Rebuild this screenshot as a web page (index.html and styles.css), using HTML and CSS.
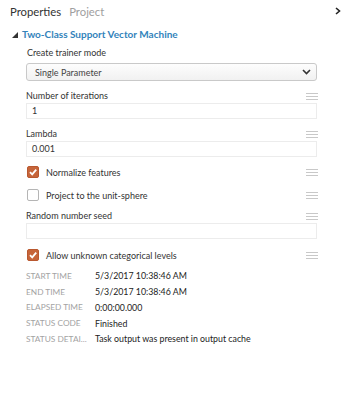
FILE: index.html
```html
<!DOCTYPE html>
<html>
<head>
<meta charset="utf-8">
<link rel="stylesheet" href="styles.css">
</head>
<body>
<div class="panel">
  <div class="tabs">
    <span class="tab active">Properties</span>
    <span class="tab">Project</span>
    <span class="collapse">
      <svg width="6" height="8" viewBox="0 0 6 8"><path d="M1 1 L4.5 4 L1 7" fill="none" stroke="#222" stroke-width="1.6"/></svg>
    </span>
  </div>
  <div class="section-title">
    <svg class="tri" width="6" height="6" viewBox="0 0 6 6"><path d="M6 0 L6 6 L0 6 Z" fill="#333"/></svg>
    <span>Two-Class Support Vector Machine</span>
  </div>
  <div class="content">
    <div class="label first">Create trainer mode</div>
    <div class="select-row">
      <div class="select">
        <span>Single Parameter</span>
        <svg width="9" height="6" viewBox="0 0 9 6"><path d="M1 1 L4.5 4.5 L8 1" fill="none" stroke="#333" stroke-width="1.6"/></svg>
      </div>
    </div>

    <div class="row label-row gap8">
      <span class="label">Number of iterations</span>
      <span class="ham"><i></i><i></i><i></i></span>
    </div>
    <div class="input">1</div>

    <div class="row label-row gap8">
      <span class="label">Lambda</span>
      <span class="ham"><i></i><i></i><i></i></span>
    </div>
    <div class="input">0.001</div>

    <div class="row check-row gap6">
      <span class="cb checked"><svg width="10" height="10" viewBox="0 0 10 10"><path d="M2 5.2 L4.2 7.4 L8.2 2.6" fill="none" stroke="#fff" stroke-width="1.8"/></svg></span>
      <span class="cb-label">Normalize features</span>
      <span class="ham"><i></i><i></i><i></i></span>
    </div>
    <div class="row check-row gap5">
      <span class="cb"></span>
      <span class="cb-label">Project to the unit-sphere</span>
      <span class="ham"><i></i><i></i><i></i></span>
    </div>

    <div class="row label-row gap5">
      <span class="label">Random number seed</span>
      <span class="ham"><i></i><i></i><i></i></span>
    </div>
    <div class="input"></div>

    <div class="row check-row gap7">
      <span class="cb checked"><svg width="10" height="10" viewBox="0 0 10 10"><path d="M2 5.2 L4.2 7.4 L8.2 2.6" fill="none" stroke="#fff" stroke-width="1.8"/></svg></span>
      <span class="cb-label">Allow unknown categorical levels</span>
      <span class="ham"><i></i><i></i><i></i></span>
    </div>

    <div class="stats">
      <span class="k">START TIME</span><span class="v">5/3/2017 10:38:46 AM</span>
      <span class="k">END TIME</span><span class="v">5/3/2017 10:38:46 AM</span>
      <span class="k">ELAPSED TIME</span><span class="v">0:00:00.000</span>
      <span class="k">STATUS CODE</span><span class="v">Finished</span>
      <span class="k">STATUS DETAI...</span><span class="v">Task output was present in output cache</span>
    </div>
  </div>
</div>
</body>
</html>
```
FILE: styles.css
```css
html, body {
  margin: 0;
  padding: 0;
  background: #fff;
}
body {
  font-family: Lato, "Open Sans", sans-serif;
  color: #333;
  width: 347px;
  height: 393px;
  overflow: hidden;
}
.panel {
  display: flex;
  flex-direction: column;
}
.tabs {
  height: 22px;
  display: flex;
  align-items: center;
  padding-left: 10px;
  padding-right: 6px;
  font-size: 11.3px;
  gap: 8px;
}
.tab { color: #a0a0a0; }
.tab.active { color: #333; }
.collapse {
  margin-left: auto;
  display: flex;
  align-items: center;
}
.section-title {
  margin-top: 1px;
  height: 22px;
  display: flex;
  align-items: center;
  padding-left: 12px;
  gap: 4px;
  font-size: 10px;
  font-weight: 700;
  color: #3383bb;
}
.tri { margin-top: 1px; }
.content {
  padding-left: 26px;
  padding-right: 30px;
  display: flex;
  flex-direction: column;
  font-size: 9px;
}
.label {
  line-height: 14px;
  color: #333;
}
.label.first { margin-top: 1px; padding-left: 1px; }
.select-row { margin-top: 3px; }
.select {
  height: 18px;
  box-sizing: border-box;
  border: 1px solid #c9c9c9;
  border-radius: 3px;
  background: linear-gradient(#fdfdfd, #f1f1f1);
  display: flex;
  align-items: center;
  justify-content: space-between;
  padding: 0 5px 0 8px;
  color: #444;
}
.row {
  display: flex;
  align-items: center;
}
.label-row { height: 14px; }
.check-row { height: 18px; }
.gap8 { margin-top: 8px; }
.gap7 { margin-top: 7px; }
.gap6 { margin-top: 6px; }
.gap5 { margin-top: 5px; }
.ham {
  margin-left: auto;
  margin-right: -1px;
  width: 12px;
  display: flex;
  flex-direction: column;
  gap: 2px;
}
.ham i {
  display: block;
  height: 1px;
  background: #c8c8c8;
}
.input {
  height: 16px;
  box-sizing: border-box;
  border: 1px solid #ececec;
  line-height: 14px;
  padding-left: 5px;
  color: #333;
}
.cb {
  width: 12px;
  height: 12px;
  box-sizing: border-box;
  border: 1px solid #b5b5b5;
  border-radius: 2px;
  margin-left: 1px;
  display: flex;
  align-items: center;
  justify-content: center;
  background: #fff;
}
.cb.checked {
  background: #c6653a;
  border-color: #b9582f;
}
.cb-label {
  margin-left: 7px;
  color: #333;
}
.stats {
  margin-top: 4px;
  display: grid;
  grid-template-columns: 69px 1fr;
  grid-auto-rows: 15.75px;
  align-items: center;
  font-size: 8.8px;
}
.k {
  color: #a3a3a3;
  font-size: 8.3px;
}
.v {
  color: #222;
}
```
